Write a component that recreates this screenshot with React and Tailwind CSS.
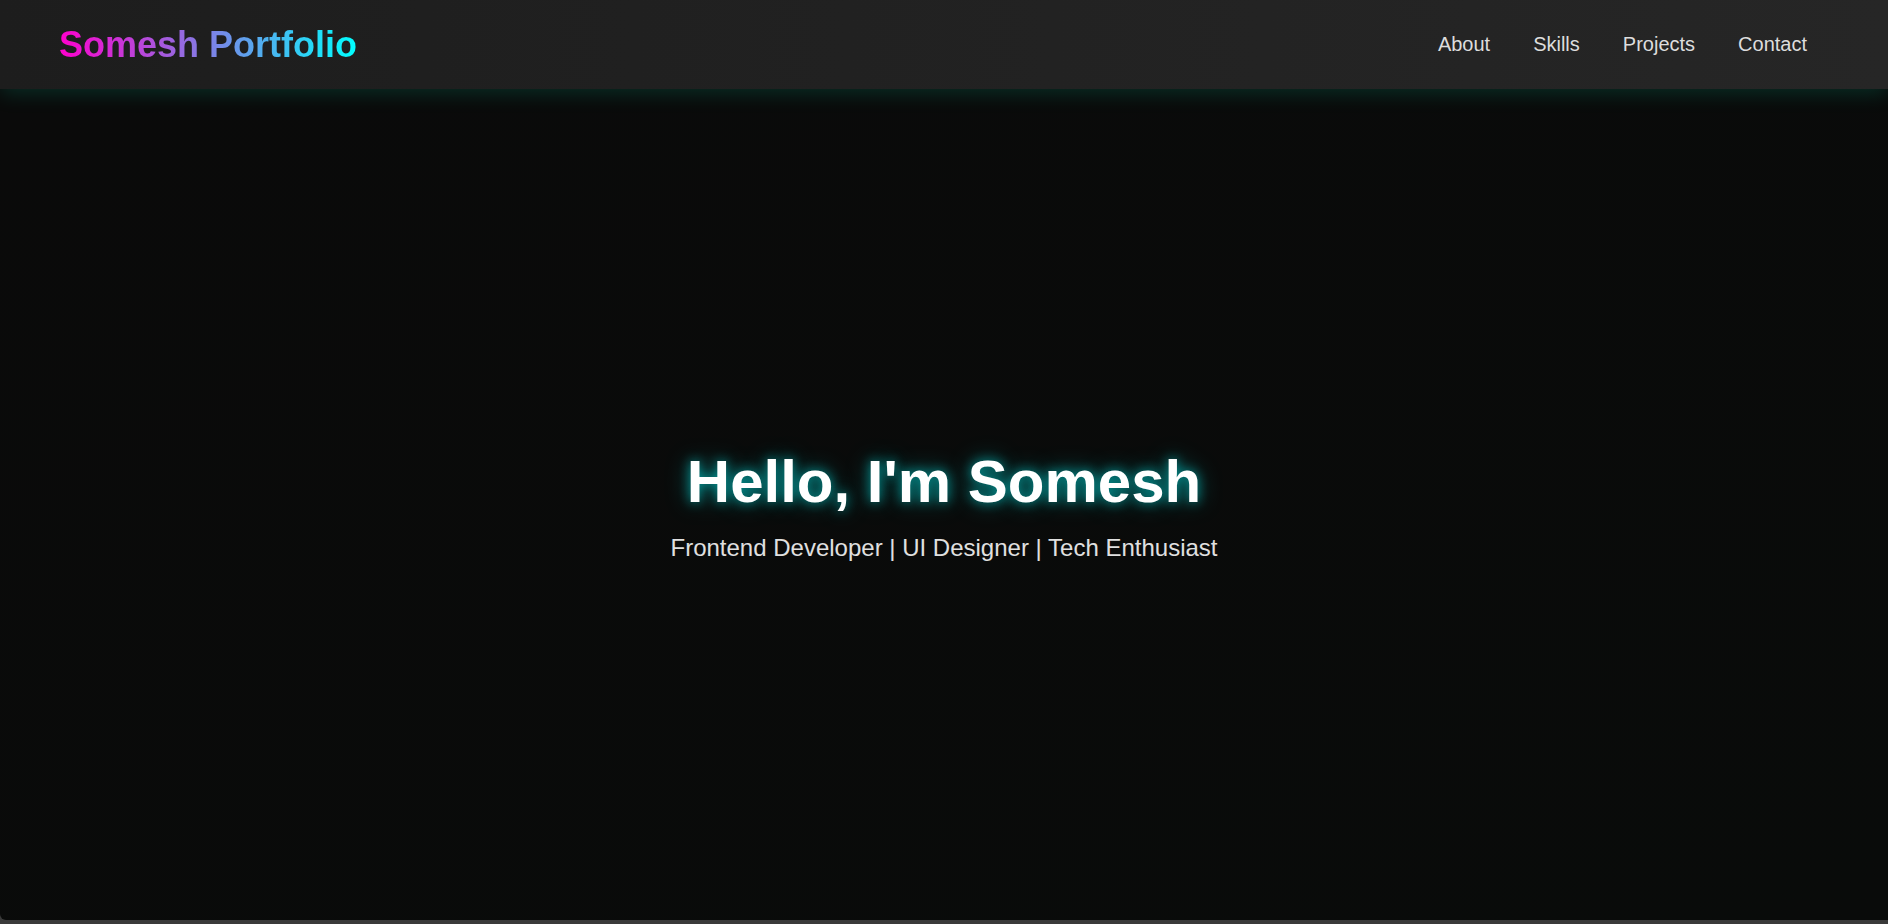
export default function App() {
  const links = ['About', 'Skills', 'Projects', 'Contact']

  return (
    <div className="min-h-screen bg-[#3a3a3a] font-['Liberation_Sans',Arial,sans-serif]">
      <header className="relative z-10 flex h-[89px] items-center justify-between bg-gradient-to-r from-[#1d1d1d] to-[#262626] pl-[59px] pr-[81px] shadow-[0_4px_20px_rgba(0,255,200,0.15)]">
        <h1 className="bg-[linear-gradient(90deg,#ff00cc,#00ffff)] bg-clip-text text-[36px] font-bold leading-none text-transparent">
          Somesh Portfolio
        </h1>
        <nav className="-mt-[2px] flex items-center gap-[43px]">
          {links.map((link) => (
            <a key={link} href={`#${link.toLowerCase()}`} className="text-[20px] text-[#dddddd] hover:text-cyan-300">
              {link}
            </a>
          ))}
        </nav>
      </header>

      <section className="flex h-[831px] flex-col items-center justify-center rounded-bl-[6px] bg-gradient-to-br from-[#0a0a0a] to-[#090b0a] text-center">
        <h2 className="mb-[16px] text-[60px] font-bold leading-[1.2] text-white [text-shadow:0_0_12px_rgba(0,255,255,0.55),0_0_24px_rgba(0,255,255,0.35)]">
          Hello, I'm Somesh
        </h2>
        <p className="text-[24px] leading-[1.2] text-[#e0e0e0]">
          Frontend Developer | UI Designer | Tech Enthusiast
        </p>
      </section>
    </div>
  )
}
